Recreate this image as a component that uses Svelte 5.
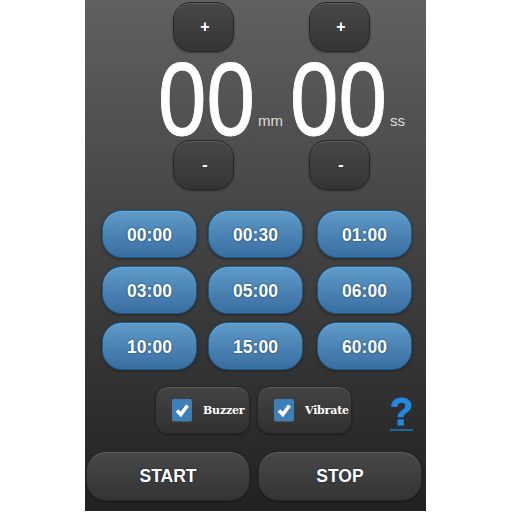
<script lang="ts">
	const presets = ['00:00', '00:30', '01:00', '03:00', '05:00', '06:00', '10:00', '15:00', '60:00'];
	const fields = [
		{ value: '00', unit: 'mm' },
		{ value: '00', unit: 'ss' }
	];
	const options = ['Buzzer', 'Vibrate'];
</script>

<main class="screen">
	<div class="spinners">
		<button type="button" class="dark spin">+</button>
		<button type="button" class="dark spin">+</button>
	</div>

	<div class="readout">
		{#each fields as field}
			<div class="field">
				<span class="value">{field.value}</span>
				<span class="unit">{field.unit}</span>
			</div>
		{/each}
	</div>

	<div class="spinners">
		<button type="button" class="dark spin">-</button>
		<button type="button" class="dark spin">-</button>
	</div>

	<div class="presets">
		{#each presets as preset}
			<button type="button" class="preset">{preset}</button>
		{/each}
	</div>

	<div class="options">
		{#each options as option}
			<div class="dark option">
				<span class="check">
					<svg viewBox="0 0 20 22" width="20" height="22">
						<path d="M5 11.5 L8.8 15.5 L15.5 6.5" fill="none" stroke="#fff" stroke-width="3.6" />
					</svg>
				</span>
				<span class="option-label">{option}</span>
			</div>
		{/each}
		<span class="help">?</span>
	</div>

	<div class="actions">
		<button type="button" class="dark action">START</button>
		<button type="button" class="dark action">STOP</button>
	</div>
</main>

<style>
	:global(body) {
		background: #fff;
	}

	.screen {
		box-sizing: border-box;
		width: 341px;
		height: 511px;
		margin-left: 85px;
		padding-top: 2px;
		background: linear-gradient(#606060, #222);
		font-family: 'Liberation Sans', Arial, sans-serif;
		overflow: hidden;
	}

	button {
		padding: 0;
		font-family: inherit;
		cursor: pointer;
	}

	.dark {
		box-sizing: border-box;
		border: 1px solid #262626;
		background: linear-gradient(#484848, #343434);
		box-shadow:
			inset 0 1px 0 #5e5e5e,
			0 1px 2px rgba(0, 0, 0, 0.35);
		color: #fff;
	}

	.spinners {
		display: flex;
		gap: 75px;
		padding-left: 88px;
	}

	.spin {
		width: 61px;
		height: 50px;
		padding-left: 3px;
		border-radius: 18px;
		font-size: 16px;
		font-weight: 700;
	}

	.readout {
		display: flex;
		gap: 7px;
		height: 88px;
		padding-left: 73px;
	}

	.field {
		display: flex;
		align-items: flex-end;
		gap: 3px;
		height: 88px;
	}

	.value {
		display: block;
		width: 97px;
		margin-bottom: -7px;
		font-size: 87px;
		line-height: 96px;
		color: #fff;
		text-align: center;
		-webkit-text-stroke: 0.8px #fff;
		transform: scaleY(1.2);
	}

	.unit {
		padding-bottom: 11px;
		font-size: 15px;
		color: #ddd;
	}

	.presets {
		display: grid;
		grid-template-columns: 106px 109px 95px;
		grid-auto-rows: 48px;
		row-gap: 8px;
		margin: 20px 0 0 17px;
	}

	.preset {
		width: 95px;
		padding-top: 2px;
		border: 1px solid #1c5c8a;
		border-radius: 20px;
		background: linear-gradient(#5f9bc8, #396da1);
		box-shadow:
			inset 0 1px 0 #6fa9d2,
			0 1px 3px #222;
		color: #fff;
		font-size: 17.5px;
		font-weight: 700;
		text-shadow: 0 0 2px #12395c;
	}

	.options {
		display: flex;
		align-items: center;
		gap: 7px;
		height: 48px;
		margin-top: 16px;
		padding-left: 70px;
	}

	.option {
		display: flex;
		align-items: center;
		width: 95px;
		height: 48px;
		padding-left: 16px;
		border-radius: 13px;
		background: linear-gradient(#444, #303030);
	}

	.check {
		display: flex;
		width: 20px;
		height: 22px;
		border-radius: 2px;
		background: #3d7fb8;
		box-shadow: 0 1px 0 #555;
	}

	.option-label {
		margin-left: 11px;
		font-family: 'DejaVu Serif', serif;
		font-size: 11px;
		font-weight: 700;
		letter-spacing: -0.2px;
	}

	.help {
		margin: 6px 0 0 31px;
		border-bottom: 2px solid #1b6a9e;
		color: #2289e0;
		font-size: 38px;
		font-weight: 700;
		line-height: 34px;
		-webkit-text-stroke: 0.8px #2289e0;
	}

	.actions {
		display: flex;
		gap: 8px;
		margin-top: 17px;
		padding-left: 1px;
	}

	.action {
		width: 164px;
		height: 50px;
		border-radius: 20px;
		font-size: 17.5px;
		font-weight: 700;
		text-shadow: 0 0 2px #123;
	}
</style>
